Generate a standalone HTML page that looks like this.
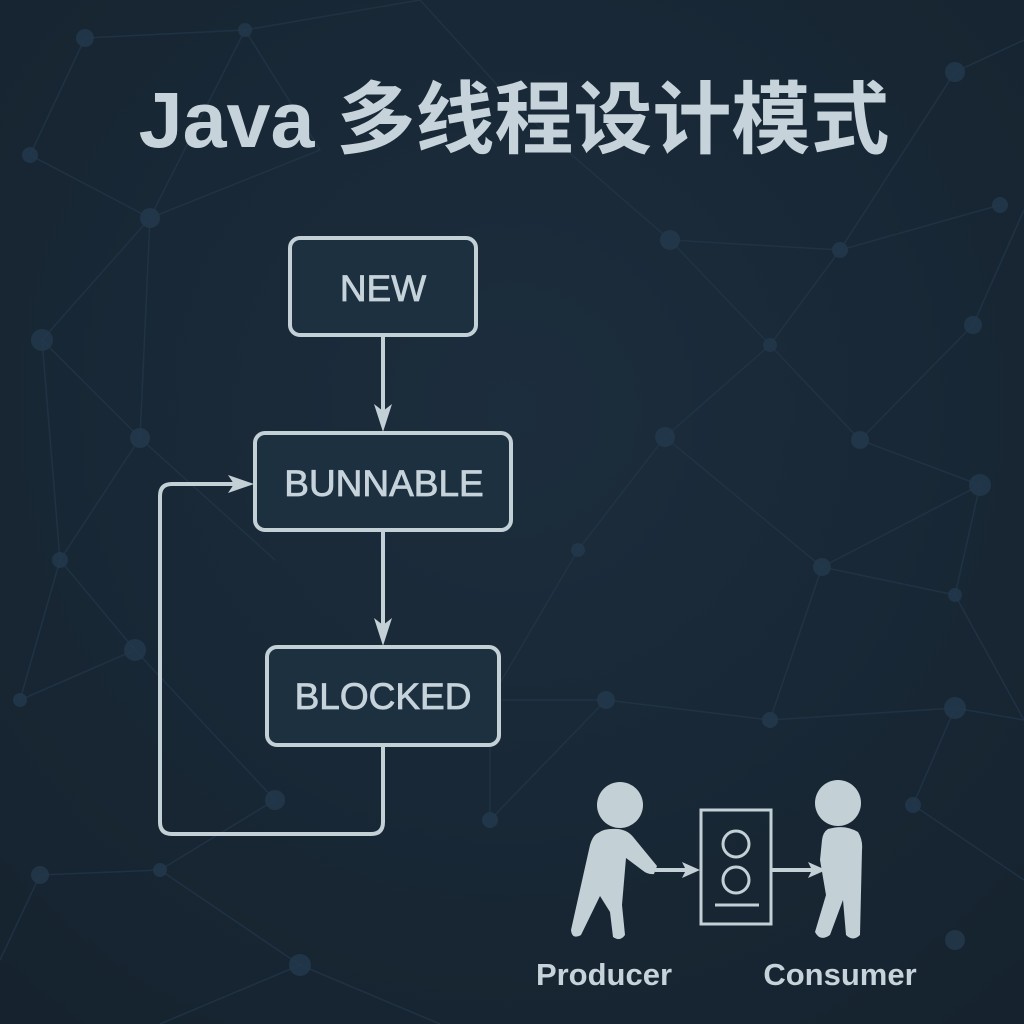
<!DOCTYPE html>
<html><head><meta charset="utf-8"><style>
html,body{margin:0;padding:0;width:1024px;height:1024px;overflow:hidden;background:#1a2a39;}
svg{display:block}
</style></head><body>
<svg width="1024" height="1024" viewBox="0 0 1024 1024" xmlns="http://www.w3.org/2000/svg">
<defs>
<radialGradient id="bg" cx="50%" cy="40%" r="75%">
<stop offset="0" stop-color="#1c2d3d"/><stop offset="1" stop-color="#16232f"/>
</radialGradient>
</defs>
<rect width="1024" height="1024" fill="url(#bg)"/>
<g stroke="#22374a" stroke-width="1.5" fill="none" opacity="0.75">
<path d="M85,38 L245,30 L420,0 M85,38 L30,155 L150,218 L245,30 M150,218 L42,340 L140,438 L150,218 M245,30 L320,150 L150,218 M420,0 L520,110 L670,240 L840,250 L955,72 L1024,40 M670,240 L770,345 L840,250 L1000,205 M42,340 L60,560 L140,438 L275,560 M60,560 L20,700 L135,650 L275,800 L160,870 L40,875 L0,960 M135,650 L60,560 M770,345 L665,437 L578,550 L490,700 L606,700 L770,720 L822,567 L665,437 M822,567 L980,485 L860,440 L770,345 M980,485 L955,595 L822,567 M955,595 L1024,720 L955,708 L770,720 M955,708 L913,805 L1024,880 M40,875 L160,870 L300,965 L440,1024 M300,965 L160,1024 M490,700 L490,820 L606,700 M860,440 L973,325 L1024,210"/>
</g>
<g fill="#22374a" opacity="0.9">
<circle cx="85" cy="38" r="9"/><circle cx="245" cy="30" r="7"/><circle cx="150" cy="218" r="10"/><circle cx="30" cy="155" r="8"/><circle cx="42" cy="340" r="11"/><circle cx="140" cy="438" r="10"/><circle cx="60" cy="560" r="8"/><circle cx="135" cy="650" r="11"/><circle cx="20" cy="700" r="7"/><circle cx="275" cy="800" r="10"/><circle cx="40" cy="875" r="9"/><circle cx="160" cy="870" r="7"/><circle cx="300" cy="965" r="11"/><circle cx="670" cy="240" r="10"/><circle cx="840" cy="250" r="8"/><circle cx="955" cy="72" r="10"/><circle cx="770" cy="345" r="7"/><circle cx="665" cy="437" r="10"/><circle cx="860" cy="440" r="9"/><circle cx="980" cy="485" r="11"/><circle cx="822" cy="567" r="9"/><circle cx="578" cy="550" r="7"/><circle cx="955" cy="595" r="7"/><circle cx="606" cy="700" r="9"/><circle cx="770" cy="720" r="8"/><circle cx="955" cy="708" r="11"/><circle cx="913" cy="805" r="8"/><circle cx="1000" cy="205" r="8"/><circle cx="973" cy="325" r="9"/><circle cx="490" cy="820" r="8"/><circle cx="955" cy="940" r="10"/>
</g>
<text x="514" y="147" text-anchor="middle" font-family="Liberation Sans, 'Noto Sans CJK SC', sans-serif" font-weight="bold" font-size="79" fill="#c6d3da">Java 多线程设计模式</text>

<g stroke="#c3d0d6" stroke-width="4" fill="#1d3040">
<rect x="290" y="238" width="186" height="97" rx="10"/>
<rect x="255" y="433" width="256" height="97" rx="10"/>
<rect x="267" y="647" width="232" height="98" rx="10"/>
</g>
<g stroke="#c3d0d6" stroke-width="4" fill="none">
<path d="M383,335 V420 M383,530 V632"/>
<path d="M383,745 V822 Q383,834 371,834 H172 Q160,834 160,822 V496 Q160,484 172,484 H240"/>
</g>
<g fill="#c3d0d6">
<path d="M374,404 L383,432 L392,404 L383,411 Z"/>
<path d="M374,618 L383,646 L392,618 L383,625 Z"/>
<path d="M228,475 L254,484 L228,493 L234,484 Z"/>
</g>
<g font-family="Liberation Sans, sans-serif" font-size="37" fill="#c6d3da" text-anchor="middle">
<text x="383" y="301" stroke="#c6d3da" stroke-width="0.8">NEW</text>
<text x="384" y="496" stroke="#c6d3da" stroke-width="0.8">BUNNABLE</text>
<text x="383" y="709" stroke="#c6d3da" stroke-width="0.8">BLOCKED</text>
</g>

<g fill="#c3d0d6">
<circle cx="620" cy="805" r="23"/>
<path d="M598,833 Q604,828 618,829 Q628,830 634,838 L657,866 L654,874 Q648,875 642,870 L626,858 L622,905 L625,935 Q620,942 613,937 L610,912 L600,896 L581,935 Q572,940 571,930 L590,845 Q593,835 598,833 Z"/>
<circle cx="838" cy="803" r="23"/>
<path d="M828,829 Q845,824 858,832 Q863,840 862,850 L860,935 Q853,942 846,935 L843,900 L830,935 Q820,942 815,932 L826,895 L820,860 L822,840 Q823,832 828,829Z"/>
<path d="M682,862 L700,870 L682,878 L686,870 Z"/>
<path d="M808,862 L826,870 L808,878 L812,870 Z"/>
</g>
<g stroke="#c3d0d6" fill="none">
<path d="M655,870 H690 M772,870 H815" stroke-width="4"/>
<rect x="701" y="810" width="70" height="114" stroke-width="3"/>
<circle cx="736" cy="844" r="13" stroke-width="3"/>
<circle cx="736" cy="880" r="13" stroke-width="3"/>
<path d="M715,905 H759" stroke-width="3"/>
</g>
<g font-family="Liberation Sans, sans-serif" font-size="31" fill="#c6d3da" text-anchor="middle" font-weight="bold">
<text x="604" y="985">Producer</text>
<text x="840" y="985">Consumer</text>
</g>
</svg>
</body></html>
